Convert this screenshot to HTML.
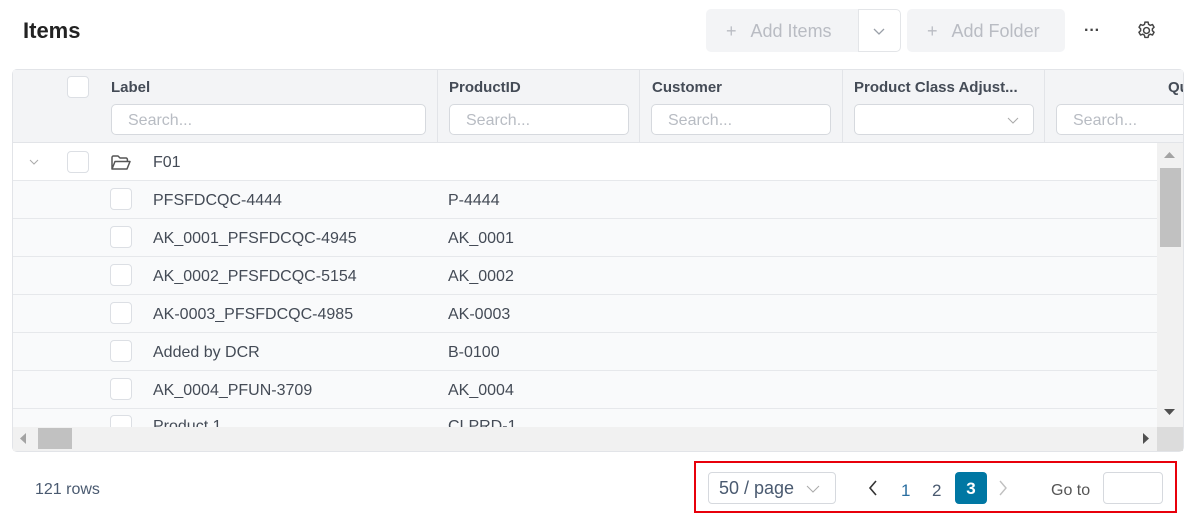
<!DOCTYPE html>
<html><head><meta charset="utf-8"><style>
*{box-sizing:border-box;margin:0;padding:0}
body{width:1195px;height:515px;background:#fff;font-family:"Liberation Sans",sans-serif;position:relative;overflow:hidden;color:#3d4450}
.a{position:absolute}
.cb{position:absolute;width:22px;height:22px;border:1px solid #dcdfe4;border-radius:4px;background:#fff}
.inp{position:absolute;top:34px;height:31px;border:1px solid #d6d9de;border-radius:5px;background:#fff;font-size:16px;color:#b8bcc3;padding:7px 0 0 16px}
.hd{position:absolute;top:9px;font-size:15px;font-weight:bold;color:#444b56}
.row{position:absolute;left:13px;width:1144px;height:38px;background:#f9fafb;border-bottom:1px solid #e6e8eb}
.t{position:absolute;font-size:16px;color:#444b56;top:11px}
.vl{position:absolute;top:0;height:73px;width:1px;background:#e2e4e8}
</style></head><body>
<div class="a" style="left:23px;top:18px;font-size:22px;font-weight:bold;color:#222">Items</div>
<div class="a" style="left:706px;top:9px;width:153px;height:43px;background:#f3f4f6;border-radius:5px 0 0 5px;font-size:18px;color:#b9bcc3;padding:12px 0 0 20px">+&nbsp;&nbsp; Add Items</div>
<div class="a" style="left:858px;top:9px;width:43px;height:43px;border:1px solid #e3e5e8;border-radius:0 5px 5px 0;background:#fff"><svg width="43" height="43" style="position:absolute;left:-1px;top:-1px"><path d="M16 20l5 5 5-5" stroke="#9aa0a8" stroke-width="1.3" fill="none"/></svg></div>
<div class="a" style="left:907px;top:9px;width:158px;height:43px;background:#f3f4f6;border-radius:5px;font-size:18px;color:#b9bcc3;padding:12px 0 0 20px">+&nbsp;&nbsp; Add Folder</div>
<div class="a" style="left:1084px;top:22px;font-size:16px;color:#444;font-weight:bold">···</div>
<svg class="a" style="left:1136px;top:20px" width="21" height="21" viewBox="0 0 20 20"><circle cx="10" cy="10" r="2.8" fill="none" stroke="#444" stroke-width="1.4"/><path d="M8.5 2h3l.5 2.2 1.6.9 2.1-.8 1.5 2.6-1.6 1.5v1.8l1.6 1.5-1.5 2.6-2.1-.8-1.6.9-.5 2.2h-3l-.5-2.2-1.6-.9-2.1.8-1.5-2.6 1.6-1.5V8.4L2.9 6.9l1.5-2.6 2.1.8 1.6-.9z" fill="none" stroke="#444" stroke-width="1.4" stroke-linejoin="round"/></svg>

<div class="a" style="left:12px;top:69px;width:1172px;height:383px;border:1px solid #e2e4e8;border-radius:5px;overflow:hidden;background:#fff"></div>
<div class="a" style="left:13px;top:70px;width:1170px;height:73px;background:#f3f4f6;border-bottom:1px solid #e2e4e8;overflow:hidden">
<div class="vl" style="left:424px"></div><div class="vl" style="left:626px"></div><div class="vl" style="left:829px"></div><div class="vl" style="left:1031px"></div>
<div class="cb" style="left:54px;top:6px"></div>
<div class="hd" style="left:98px">Label</div>
<div class="hd" style="left:436px">ProductID</div>
<div class="hd" style="left:639px">Customer</div>
<div class="hd" style="left:841px">Product Class Adjust...</div>
<div class="hd" style="left:1155px">Qu</div>
<div class="inp" style="left:98px;width:315px">Search...</div>
<div class="inp" style="left:436px;width:180px">Search...</div>
<div class="inp" style="left:638px;width:180px">Search...</div>
<div class="inp" style="left:841px;width:180px"><svg width="12" height="8" style="position:absolute;right:14px;top:12px"><path d="M1 1l5 5 5-5" stroke="#aaa" fill="none"/></svg></div>
<div class="inp" style="left:1043px;width:140px">Search...</div>
</div>

<div class="row" style="top:143px;background:#fff"><svg class="a" style="left:16px;top:16px" width="10" height="7"><path d="M1 1l4 4 4-4" stroke="#aaa" fill="none"/></svg><div class="cb" style="left:54px;top:8px"></div>
<svg class="a" style="left:97px;top:10px" width="22" height="20" viewBox="0 0 22 20"><path d="M2 16V4.5C2 3.7 2.6 3 3.4 3H8l2 2h6c.8 0 1.4.7 1.4 1.5V8M2 16l3-7.5h15L17 16z" fill="none" stroke="#555" stroke-width="1.5" stroke-linejoin="round"/></svg>
<div class="t" style="left:140px">F01</div></div>
<div class="row" style="top:181px"><div class="cb" style="left:97px;top:7px"></div><div class="t" style="left:140px">PFSFDCQC-4444</div><div class="t" style="left:435px">P-4444</div></div>
<div class="row" style="top:219px"><div class="cb" style="left:97px;top:7px"></div><div class="t" style="left:140px">AK_0001_PFSFDCQC-4945</div><div class="t" style="left:435px">AK_0001</div></div>
<div class="row" style="top:257px"><div class="cb" style="left:97px;top:7px"></div><div class="t" style="left:140px">AK_0002_PFSFDCQC-5154</div><div class="t" style="left:435px">AK_0002</div></div>
<div class="row" style="top:295px"><div class="cb" style="left:97px;top:7px"></div><div class="t" style="left:140px">AK-0003_PFSFDCQC-4985</div><div class="t" style="left:435px">AK-0003</div></div>
<div class="row" style="top:333px"><div class="cb" style="left:97px;top:7px"></div><div class="t" style="left:140px">Added by DCR</div><div class="t" style="left:435px">B-0100</div></div>
<div class="row" style="top:371px"><div class="cb" style="left:97px;top:7px"></div><div class="t" style="left:140px">AK_0004_PFUN-3709</div><div class="t" style="left:435px">AK_0004</div></div>
<div class="row" style="top:409px;height:18px;overflow:hidden;border:none"><div class="cb" style="left:97px;top:6px"></div><div class="t" style="left:140px;top:9px">Product 1</div><div class="t" style="left:435px;top:9px">CLPRD-1</div></div>

<div class="a" style="left:1157px;top:143px;width:26px;height:284px;background:#f1f1f1"></div>
<div class="a" style="left:1160px;top:168px;width:21px;height:79px;background:#c1c1c1"></div>
<svg class="a" style="left:1164px;top:152px" width="11" height="7"><path d="M0 6L5.5 0 11 6z" fill="#a3a3a3"/></svg>
<svg class="a" style="left:1164px;top:409px" width="11" height="7"><path d="M0 0L5.5 6 11 0z" fill="#505050"/></svg>
<div class="a" style="left:13px;top:427px;width:1144px;height:24px;background:#f1f1f1"></div>
<div class="a" style="left:1157px;top:427px;width:26px;height:24px;background:#dcdcdc"></div>
<div class="a" style="left:38px;top:428px;width:34px;height:21px;background:#c1c1c1"></div>
<svg class="a" style="left:20px;top:433px" width="6" height="11"><path d="M6 0L0 5.5 6 11z" fill="#a3a3a3"/></svg>
<svg class="a" style="left:1143px;top:433px" width="6" height="11"><path d="M0 0L6 5.5 0 11z" fill="#505050"/></svg>

<div class="a" style="left:35px;top:481px;font-size:16px;color:#4a5a70">121 rows</div>
<div class="a" style="left:694px;top:461px;width:483px;height:52px;border:2px solid #e8000b"></div>
<div class="a" style="left:708px;top:472px;width:128px;height:32px;border:1px solid #d6d9de;border-radius:4px;font-size:18px;color:#4a5a70;padding:5px 0 0 10px">50 / page<svg width="14" height="9" style="position:absolute;left:97px;top:12px"><path d="M1 1l6 6 6-6" stroke="#aaa" fill="none"/></svg></div>
<svg class="a" style="left:868px;top:480px" width="10" height="16"><path d="M8 1L2 8l6 7" stroke="#333" stroke-width="1.6" fill="none"/></svg>
<div class="a" style="left:901px;top:481px;font-size:17px;color:#2a6ea0">1</div>
<div class="a" style="left:932px;top:481px;font-size:17px;color:#4a5a70">2</div>
<div class="a" style="left:955px;top:472px;width:32px;height:32px;background:#0077a3;border-radius:4px;color:#fff;font-weight:bold;font-size:17px;text-align:center;padding-top:7px">3</div>
<svg class="a" style="left:998px;top:480px" width="10" height="16"><path d="M2 1l6 7-6 7" stroke="#c0c0c0" stroke-width="1.4" fill="none"/></svg>
<div class="a" style="left:1051px;top:482px;font-size:16px;color:#555">Go to</div>
<div class="a" style="left:1103px;top:472px;width:60px;height:32px;border:1px solid #d6d9de;border-radius:4px"></div>
</body></html>
